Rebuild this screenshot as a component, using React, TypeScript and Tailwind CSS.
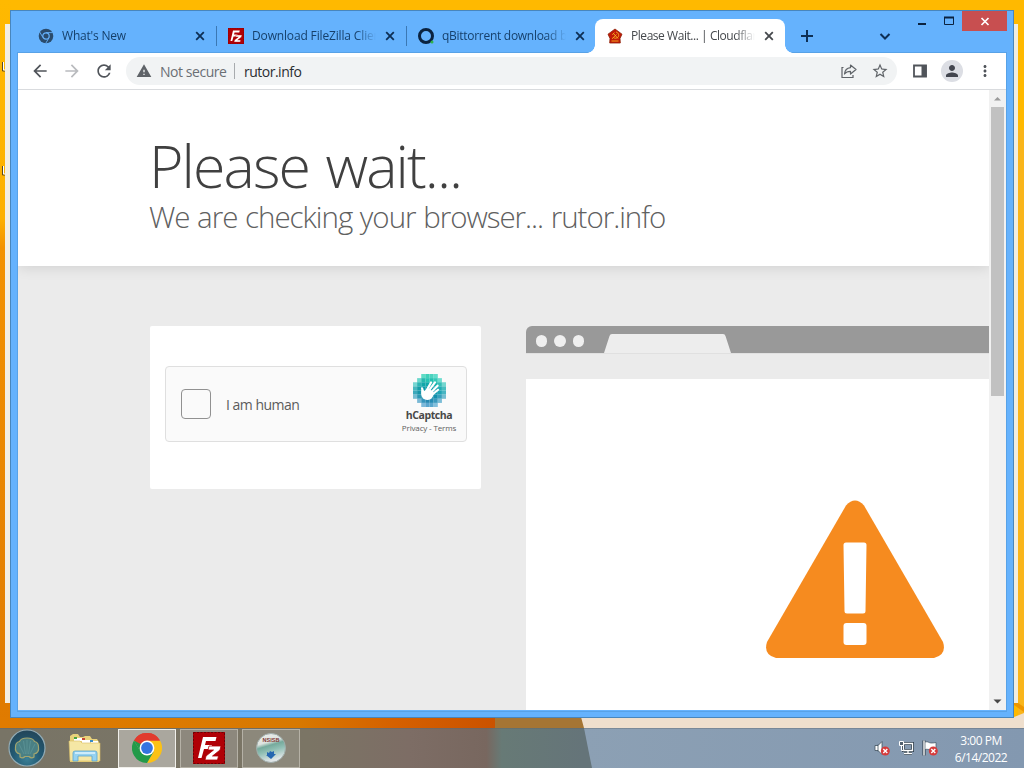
import React from 'react';
import { MdArrowBack, MdArrowForward, MdRefresh, MdWarning, MdStarOutline, MdPerson, MdMoreVert } from 'react-icons/md';

interface TabItem {
  title: string;
  icon: React.ReactNode;
  textClass: string;
  active?: boolean;
  divider?: boolean;
}

const FileZillaIcon = ({ size }: { size: number }) => (
  <svg width={size} height={size} viewBox="0 0 32 32">
    <rect width="32" height="32" fill="#b00006" />
    <rect x="0.5" y="0.5" width="31" height="31" fill="none" stroke="#6e0004" strokeDasharray="2 1.5" />
    <path d="M10 5h13.500l-1 4h-9.500l-1 4h7l-1 4h-7l-2.500 9H5z" fill="#fff" />
    <path d="M16 14h12l-1 4-7.500 6h6l-1 4H12l1-4 7.500-6H15z" fill="#fff" stroke="#b00006" strokeWidth="0.8" />
  </svg>
);

const MonoChromeIcon = () => (
  <svg width="16" height="16" viewBox="0 0 16 16">
    <circle cx="8" cy="8" r="7.300" fill="#2a4b6c" />
    <circle cx="8" cy="8" r="3.200" fill="#2a4b6c" stroke="#66b2fc" strokeWidth="1.200" />
    <path d="M8 4.600h6.800M5 9.600L1.700 4M11 9.700L7.700 15.400" stroke="#66b2fc" strokeWidth="0.900" />
  </svg>
);

const QbIcon = () => (
  <svg width="16" height="16" viewBox="0 0 16 16">
    <circle cx="8" cy="8" r="6.500" fill="none" stroke="#0b2340" strokeWidth="3" />
    <circle cx="14" cy="14" r="1.500" fill="#2fb34a" />
  </svg>
);

const RutorIcon = () => (
  <svg width="16" height="16" viewBox="0 0 16 16">
    <path d="M8 1l7 5.200-2 4.300.3 4.500H2.700L3 10.500 1 6.200z" fill="#c21a08" stroke="#8d2108" strokeWidth="0.8" />
    <path d="M5 10.800l4.500-4.300M5.300 6.700l2.200-2M6.500 5.500l4.500 5M9 4c3 .8 3.500 4 1.500 5.600-1.200.8-3 .8-4 0M4.500 13h7" fill="none" stroke="#f8b322" strokeWidth="0.900" />
  </svg>
);

const CloseIcon = ({ color }: { color: string }) => (
  <svg width="16" height="16" viewBox="0 0 16 16" className="shrink-0">
    <path d="M4.200 4.200l7.600 7.600M11.800 4.200l-7.600 7.600" stroke={color} strokeWidth="1.800" />
  </svg>
);

const tabs: TabItem[] = [
  { title: "What's New", icon: <MonoChromeIcon />, textClass: 'text-[#16406b] tracking-[-0.2px]', divider: true },
  { title: 'Download FileZilla Client', icon: <FileZillaIcon size={16} />, textClass: 'text-[#16406b] tracking-[-0.15px]', divider: true },
  { title: 'qBittorrent download bit', icon: <QbIcon />, textClass: 'text-[#16406b] tracking-[-0.28px]' },
  { title: 'Please Wait... | Cloudflare', icon: <RutorIcon />, textClass: 'text-[#45484c] tracking-[-0.45px]', active: true }
];

const Wallpaper = () => (
  <svg className="absolute inset-0" width="1024" height="768" viewBox="0 0 1024 768">
    <defs>
      <linearGradient id="side" x1="0" y1="0" x2="0" y2="1">
        <stop offset="0" stopColor="#ffb900" />
        <stop offset="0.3" stopColor="#fdb000" />
        <stop offset="0.34" stopColor="#f39200" />
        <stop offset="1" stopColor="#df7a00" />
      </linearGradient>
      <linearGradient id="low" x1="0" y1="0" x2="1" y2="0">
        <stop offset="0" stopColor="#e07b00" />
        <stop offset="0.6" stopColor="#d87900" />
        <stop offset="0.8" stopColor="#d56000" />
        <stop offset="1" stopColor="#cb5200" />
      </linearGradient>
      <linearGradient id="bar" gradientUnits="userSpaceOnUse" x1="0" y1="0" x2="1024" y2="0">
        <stop offset="0" stopColor="#787466" />
        <stop offset="0.3" stopColor="#7b7565" />
        <stop offset="0.4" stopColor="#7d6d65" />
        <stop offset="0.475" stopColor="#78675f" />
        <stop offset="0.49" stopColor="#677a76" />
        <stop offset="0.57" stopColor="#657479" />
      </linearGradient>
      <linearGradient id="barRight" x1="0" y1="0" x2="1" y2="0">
        <stop offset="0" stopColor="#8ca0b4" />
        <stop offset="1" stopColor="#8398b0" />
      </linearGradient>
    </defs>
    <rect width="1024" height="768" fill="#ffb900" />
    <rect width="12" height="728" fill="url(#side)" />
    <rect x="5" y="24" width="6" height="679" fill="#f3eee2" />
    <rect x="1012" y="24" width="6" height="679" fill="#f0ede2" />
    <path d="M1018 130h6v598h-6z" fill="#f9b51b" />
    <path d="M1014 703h4l6 4v5l-10-7z" fill="#ee9600" />
    {/* strip between the window and the taskbar */}
    <rect y="717" width="495" height="11" fill="url(#low)" />
    <rect x="495" y="717" width="90" height="11" fill="#a57534" />
    <path d="M581 717h433l10-4v15H584z" fill="#efdfcd" />
    <rect y="728" width="1024" height="40" fill="url(#bar)" />
    <path d="M584 728h440v40H592z" fill="url(#barRight)" />
    <rect y="728" width="1024" height="1" fill="#5d6266" opacity="0.35" />
    {/* desktop shortcut labels peeking out */}
    <path d="M2.500 62v9h2.500M2.500 166v9h2.500" fill="none" stroke="#5a4a24" />
    <path d="M3.500 62v8h1.500M3.500 166v8h1.500" fill="none" stroke="#fff" />
  </svg>
);

const Tab = ({ tab }: { tab: TabItem }) => (
  <div
    className={`relative flex h-[34px] w-[190px] shrink-0 items-center ${
      tab.active ? 'rounded-t-lg bg-white pl-3' : 'pl-[13px]'
    }`}
  >
    {tab.icon}
    <div className={`ml-2 mr-[6px] w-[124px] shrink-0 overflow-hidden whitespace-nowrap text-[12px] leading-4 [mask-image:linear-gradient(to_right,black_84%,transparent)] ${tab.textClass}`}>
      {tab.title}
    </div>
    <CloseIcon color={tab.active ? '#45484c' : '#0d2f55'} />
    {tab.divider && <div className="absolute right-[-2px] top-[7px] h-5 w-px bg-[#3b78b4]" />}
    {tab.active && (
      <>
        <div className="absolute -left-2 bottom-0 size-2 bg-[radial-gradient(circle_at_0_0,transparent_7.5px,white_8px)]" />
        <div className="absolute -right-2 bottom-0 size-2 bg-[radial-gradient(circle_at_100%_0,transparent_7.5px,white_8px)]" />
      </>
    )}
  </div>
);

const TitleBar = () => (
  <div className="flex h-[42px] justify-between pl-[14px]">
    <div className="flex items-end">
      {tabs.map((tab) => (
        <Tab key={tab.title} tab={tab} />
      ))}
      <svg width="44" height="34" viewBox="0 0 44 34">
        <path d="M22 11v12M16 17h12" stroke="#0d2f55" strokeWidth="2" />
      </svg>
      <svg className="ml-[46px]" width="20" height="34" viewBox="0 0 20 34">
        <path d="M5.500 15l4.500 4.500 4.500-4.500" fill="none" stroke="#0d2f55" strokeWidth="2" />
      </svg>
    </div>
    <div className="mr-[6px] flex h-5">
      <svg width="45" height="20" viewBox="0 0 45 20">
        <path d="M1 13h8" stroke="#0b2340" strokeWidth="2" />
        <path d="M27.500 6v7.500h9V6" fill="none" stroke="#0b2340" />
        <path d="M27 6.500h10" stroke="#0b2340" strokeWidth="2" />
      </svg>
      <div className="flex w-[45px] items-center justify-center bg-[#c84f50]">
        <svg width="10" height="10" viewBox="0 0 10 10">
          <path d="M1.500 2l7 7M8.500 2l-7 7" stroke="#fff" strokeWidth="1.700" />
        </svg>
      </div>
    </div>
  </div>
);

const Toolbar = () => (
  <div className="flex h-[37px] items-center border-b border-[#d9dbde] bg-white pl-3 text-[#5f6368]">
    <MdArrowBack size={20} className="text-[#50545a]" />
    <MdArrowForward size={20} className="ml-3 text-[#b9bbbe]" />
    <MdRefresh size={20} className="ml-3 text-[#50545a]" />
    <div className="ml-3 flex h-7 w-[771px] items-center rounded-full bg-[#f1f3f4] pl-[10px] text-[14px]">
      <MdWarning size={16} />
      <span className="ml-2 w-[67px] whitespace-nowrap tracking-[-0.45px] text-[#6b6f74]">Not secure</span>
      <div className="ml-[7px] h-4 w-px bg-[#a8abae]" />
      <span className="ml-[9px] tracking-[-0.5px] text-[#2b2e32]">rutor.info</span>
      <svg className="ml-auto" width="18" height="18" viewBox="0 0 18 18" fill="none" stroke="#5f6368" strokeWidth="1.200">
        <path d="M3.500 5.500h-1.500v10h11v-2.500" />
        <path d="M10.500 3l5.500 4.500-5.500 4.500V9.300c-2.800 0-4.700.9-6 2.700.3-3.500 2.300-6 6-6.400z" strokeLinejoin="round" />
      </svg>
      <MdStarOutline size={18} className="ml-[13px] mr-[8px]" />
    </div>
    <svg className="ml-[15px]" width="16" height="16" viewBox="0 0 16 16">
      <path d="M2 2.500h12v11H2z" fill="none" stroke="#50545a" strokeWidth="1.800" />
      <path d="M9.500 2h5v12h-5z" fill="#50545a" />
    </svg>
    <div className="ml-[13px] flex size-[22px] items-center justify-center rounded-full bg-[#dcdee4]">
      <MdPerson size={18} className="text-[#43464f]" />
    </div>
    <MdMoreVert size={18} className="ml-[13px] text-[#50545a]" />
  </div>
);

const logoColors = [
  ['', '', '#5fdcc6', '#3ed0b8', '#4cd3bf', '#63dccb', '', ''],
  ['', '#6ad7cb', '#27b9b0', '#27c4b3', '#22c0b0', '#34c9b8', '#6fddd0', ''],
  ['#78d6d2', '#2cb5b4', '#12a7a9', '#0fa9ab', '#14b0ad', '#1ab4af', '#35bfb7', '#74d7d0'],
  ['#47b8be', '#169da8', '#0a9ba8', '#0a9ba8', '#0c9daa', '#10a4ad', '#21adb3', '#48bfc0'],
  ['#3da9bb', '#1895a8', '#0a90a5', '#0a8fa6', '#0c93a9', '#0f98ad', '#1ea3b4', '#48b5c2'],
  ['#78bdd2', '#2c98b4', '#118aa6', '#0c86a5', '#0f8aa9', '#148fad', '#379fbd', '#75bed1'],
  ['', '#79b8d5', '#3795bc', '#2889b1', '#258cb4', '#3a99bd', '#7bbdd7', ''],
  ['', '', '#7eb9da', '#5aa5ce', '#5aa7cd', '#83bfdc', '', '']
];

const HCaptchaLogo = () => (
  <svg width="33" height="33" viewBox="0 0 32 32" shapeRendering="geometricPrecision">
    {logoColors.map((row, y) =>
      row.map((color, x) => color && <rect key={`${x}-${y}`} x={x * 4} y={y * 4} width="4.050" height="4.050" fill={color} />)
    )}
    {/* waving hand, fingers to the upper right */}
    <path d="M12 18L17.500 8.200M14 18L21.300 8.200M16 19.500L23.800 11.300M17.500 21L24.300 15.300M10.500 20L8.800 13.800" stroke="#fff" strokeWidth="2.100" strokeLinecap="round" />
    <path d="M8.200 15l3 1.500 4-2.500 5 4-1 4c-1.700 3-5 4-8 2.600-3.200-1.600-3.800-5-3-9.600z" fill="#fff" />
  </svg>
);

const Captcha = () => (
  <div className="h-[163px] w-[331px] rounded-[2px] bg-white px-[15px] pt-10">
    <div className="flex h-[76px] w-[302px] items-center rounded-[4px] border border-[#dfdfdf] bg-[#fafafa]">
      <div className="ml-[15px] size-[30px] rounded-[4px] border border-[#919191] bg-[#fafafa]" />
      <span className="ml-[15px] text-[14px] tracking-[-0.5px] text-[#5c5c5c]">I am human</span>
      <div className="ml-auto mr-[7px] flex w-[60px] flex-col items-center">
        <HCaptchaLogo />
        <div className="mt-[2px] text-[10.500px] font-bold leading-[13px] tracking-[-0.400px] text-[#484848]">hCaptcha</div>
        <div className="whitespace-nowrap text-[8px] leading-[12px] tracking-[-0.15px] text-[#606060]">Privacy - Terms</div>
      </div>
    </div>
  </div>
);

const BrowserFigure = () => (
  <div className="flex w-[463px] flex-col">
    <div className="flex h-[27px] rounded-tl-[6px] bg-[#999] pl-[9.500px]">
      <div className="flex items-center gap-[7px] pt-[3px]">
        <div className="size-[11.500px] rounded-full bg-[#efefef]" />
        <div className="size-[11.500px] rounded-full bg-[#efefef]" />
        <div className="size-[11.500px] rounded-full bg-[#efefef]" />
      </div>
      <svg className="ml-5" width="128" height="27" viewBox="0 0 128 27">
        <path d="M0 27L5.500 10Q6 8 8 8h111q2 0 2.500 2L127 27z" fill="#ededed" />
      </svg>
    </div>
    <div className="h-[26px] border-t border-[#e0e0e0]" />
    <div className="flex-1 bg-white pl-[239px] pt-[120px]">
      <svg width="180" height="160" viewBox="0 0 180 160">
        <path d="M81 6.500Q90-3.500 99 6.500L178 143Q182 156 169 159H11Q-2 156 2 143z" fill="#f68b1f" />
        <path d="M81 43.500h18q2.500 0 2.500 2.500l-1 66q0 2.500-2.500 2.500H82q-2.500 0-2.500-2.500l-1-66q0-2.500 2.500-2.500z" fill="#fff" />
        <rect x="78.500" y="124" width="23" height="22" rx="3" fill="#fff" />
      </svg>
    </div>
  </div>
);

const PageView = () => (
  <div className="flex h-[620px]">
    <div className="flex w-[971px] flex-col overflow-hidden bg-[#ebebeb]">
      <header className="h-[176px] shrink-0 bg-white pl-[131px] pt-[45px] shadow-[0_0_14px_rgba(0,0,0,0.14)]">
        <h1 className="whitespace-nowrap text-[59px] font-light leading-[60px] tracking-[-1.900px] text-[#404040] [word-spacing:3px]">Please wait...</h1>
        <h2 className="mt-[4px] whitespace-nowrap text-[29.500px] font-light leading-[36px] tracking-[-1.020px] text-[#606060] [word-spacing:1px]">
          We are checking your browser... rutor.info
        </h2>
      </header>
      <div className="flex flex-1 gap-[45px] pl-[132px] pt-[60px]">
        <Captcha />
        <BrowserFigure />
      </div>
    </div>
    <div className="flex w-[17px] flex-col items-center bg-[#f1f1f1] pb-[6px] pt-[6px]">
      <svg width="7" height="5" viewBox="0 0 7 5">
        <path d="M0 4.500L3.500 1 7 4.500z" fill="#9a9a9a" />
      </svg>
      <div className="mt-[6px] h-[289px] w-[13px] bg-[#c1c1c1]" />
      <svg className="mt-auto" width="9" height="5" viewBox="0 0 9 5">
        <path d="M0.500 0.500h8L4.500 4.500z" fill="#484848" />
      </svg>
    </div>
  </div>
);

const StartOrb = () => (
  <svg width="38" height="38" viewBox="0 0 38 38">
    <defs>
      <radialGradient id="orb" cx="0.5" cy="0.8" r="0.8">
        <stop offset="0" stopColor="#3b7f95" />
        <stop offset="0.5" stopColor="#225871" />
        <stop offset="1" stopColor="#234558" />
      </radialGradient>
    </defs>
    <circle cx="19" cy="19" r="18" fill="url(#orb)" stroke="#91abb5" strokeWidth="1.200" />
    <path d="M12 28v-3c-4-1-5-4-4.500-7 0-3 1.500-5 4-5.500C12.500 10 15 9 19 9s6.500 1 7.500 3.500c2.500.5 4 2.500 4 5.500.500 3-.5 6-4.500 7v3c-2 1.500-4 .5-5-.5h-4c-1 1-3 2-5 .5z" fill="#4a8084" stroke="#a3a56f" strokeWidth="1.200" />
    <path d="M16 25l-5-10M17.500 25l-2-13M19 25V11M20.500 25l2-13M22 25l5-10" stroke="#5d9498" strokeWidth="0.8" />
  </svg>
);

const ExplorerIcon = () => (
  <svg width="34" height="32" viewBox="0 0 34 32">
    <path d="M2 4l3-2h5l2 3h3l2-1h5l2 3h5l2 3v20H2z" fill="#e8d27b" />
    <path d="M6 6h9v3H6zM14 8h8v3h-8zM23 9h7v3h-7z" fill="#fff" />
    <path d="M6 5h3v2H6z" fill="#48a443" />
    <path d="M14 6h3v2h-3z" fill="#c64634" />
    <path d="M22 8h3v2h-3z" fill="#398ac5" />
    <path d="M1 9h11l2 2h18v18H2z" fill="#f5e7a5" stroke="#d9bd62" strokeWidth="0.6" />
    <path d="M5 29V21q0-2 2-2h20q2 0 2 2v8h-5v-5H10v5z" fill="#96d2f0" stroke="#5ba5ce" strokeWidth="0.8" />
    <path d="M7 21h20" stroke="#dff4ff" strokeWidth="1.500" />
  </svg>
);

const ChromeIcon = () => (
  <svg width="30" height="30" viewBox="0 0 30 30">
    <path d="M15 15L2 7.500A15 15 0 0 1 28 7.500z" fill="#e13b2e" />
    <path d="M15 7.500h13A15 15 0 0 1 15 30l6.500-11.200z" fill="#fbc116" />
    <path d="M2 7.500A15 15 0 0 0 15 30l6.500-11.200L15 15 8.500 18.700z" fill="#239a49" />
    <path d="M2 7.500L8.500 18.700 15 15V7.500z" fill="#239a49" />
    <path d="M2 7.500L8.500 11 15 7.500h13A15 15 0 0 0 2 7.500z" fill="#e13b2e" />
    <circle cx="15" cy="15" r="7.400" fill="#fff" />
    <circle cx="15" cy="15" r="5.900" fill="#3474e0" />
  </svg>
);

const InstallerIcon = () => (
  <svg width="32" height="32" viewBox="0 0 32 32">
    <defs>
      <linearGradient id="disc" x1="0" y1="0" x2="0.3" y2="1">
        <stop offset="0" stopColor="#eef0ee" />
        <stop offset="0.38" stopColor="#dde3df" />
        <stop offset="0.5" stopColor="#75aa9c" />
        <stop offset="0.68" stopColor="#91c0b5" />
        <stop offset="1" stopColor="#e0e5e7" />
      </linearGradient>
    </defs>
    <circle cx="16" cy="16" r="14.500" fill="url(#disc)" stroke="#a0adab" />
    <text x="16" y="10" textAnchor="middle" fontSize="5.500" fontWeight="bold" fill="#823c38" fontFamily="Liberation Sans, sans-serif">NSISB</text>
    <path d="M12 20l2 1 1-2 2 1 2-1v3h2L16 27l-5-4h1z" fill="#2667b0" />
  </svg>
);

const ErrorBadge = () => (
  <>
    <circle cx="11.300" cy="12" r="4.500" fill="#d63b3b" />
    <path d="M9.300 10l4 4M13.300 10l-4 4" stroke="#fff" strokeWidth="1.400" />
  </>
);

const Tray = () => (
  <div className="ml-auto flex items-center pr-[16px]">
    <svg width="16" height="18" viewBox="0 0 16 18">
      <path d="M1 6.500h3l4-4v13l-4-4H1z" fill="#fff" stroke="#40505e" strokeWidth="0.8" />
      <path d="M4 5.500v7" stroke="#40505e" strokeWidth="0.8" />
      <ErrorBadge />
    </svg>
    <svg className="ml-[8px]" width="16" height="18" viewBox="0 0 16 18" fill="none">
      <path d="M5.500 4.500h9v7h-9zM10 12v2.500M6 14.500h8" stroke="#30404e" strokeWidth="3" />
      <path d="M5.500 4.500h9v7h-9zM10 12v2.500M6 14.500h8" stroke="#fff" strokeWidth="1.300" />
      <path d="M1.500 2.500h4v4h-4zM3.500 7v4.500h2" fill="#52616e" stroke="#fff" />
    </svg>
    <svg className="ml-[8px]" width="16" height="18" viewBox="0 0 16 18">
      <path d="M2 1.500v15" stroke="#263540" strokeWidth="3" />
      <path d="M3 3c3-1 4 1 6 1s3 0 5-.5v7c-3 1-4 0-6 0s-3-.5-5 0z" fill="#fff" stroke="#40505e" strokeWidth="0.7" />
      <path d="M2 1.500v15" stroke="#fff" strokeWidth="1.400" />
      <ErrorBadge />
    </svg>
    <div className="ml-[16px] mt-px w-[54px] whitespace-nowrap text-center text-[12px] leading-[17px] tracking-[-0.5px] text-white">
      <div>3:00 PM</div>
      <div>6/14/2022</div>
    </div>
  </div>
);

const Taskbar = () => (
  <div className="relative flex h-10 items-center pl-2">
    <StartOrb />
    <div className="ml-[22px] w-[34px]">
      <ExplorerIcon />
    </div>
    <div className="ml-4 flex gap-1">
      <div className="flex h-[39px] w-[58px] items-center justify-center border border-[#f0efea] bg-[#aaa79e]">
        <ChromeIcon />
      </div>
      <div className="flex h-[39px] w-[58px] items-center justify-center border border-[#b5b1a6] bg-[#8d887d]">
        <FileZillaIcon size={32} />
      </div>
      <div className="flex h-[39px] w-[58px] items-center justify-center border border-[#b5b1a6] bg-[#8c887b]">
        <InstallerIcon />
      </div>
    </div>
    <Tray />
  </div>
);

export default function App() {
  return (
    <div className="relative h-[768px] w-[1024px] overflow-hidden font-['Open_Sans','Noto_Sans',sans-serif]">
      <Wallpaper />
      <div className="relative h-[728px] pl-[10px] pt-[10px]">
        <div className="h-[708px] w-[1004px] border border-[#4886bd] bg-[#65b2fd]">
          <TitleBar />
          <div className="ml-[7px] h-[658px] w-[988px] outline outline-1 outline-[#4b91d2]/50">
            <Toolbar />
            <PageView />
          </div>
        </div>
      </div>
      <Taskbar />
    </div>
  );
}
